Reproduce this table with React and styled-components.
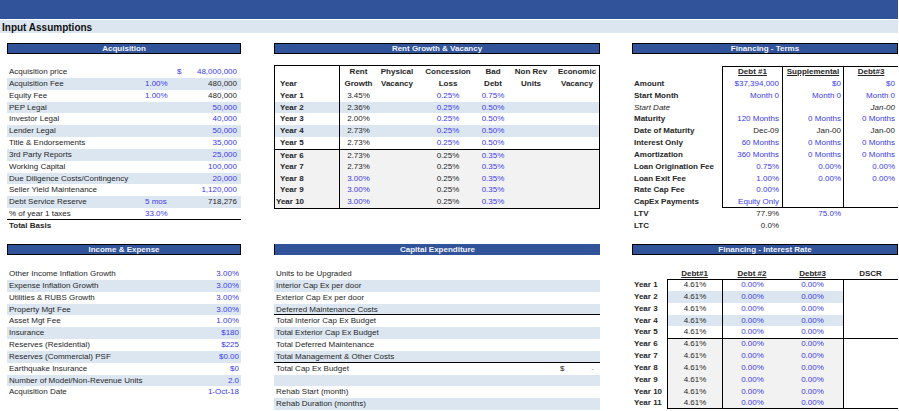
import React from 'react';
import styled, { createGlobalStyle, css } from 'styled-components';

const NAVY = '#30539a';
const SHADE = '#dce6f1';
const GREY = '#f2f2f2';
const BLUE = '#3a3aee';
const INK = '#262626';
const ROW = '11.85px';

const GlobalStyle = createGlobalStyle`
  html, body {
    margin: 0;
    padding: 0;
    background: #fff;
  }
  body {
    width: 899px;
    height: 411px;
    overflow: hidden;
    font-family: "Liberation Sans", Arial, sans-serif;
    font-size: 8px;
    color: ${INK};
  }
`;

const TopBar = styled.div`
  width: 898px;
  height: 19px;
  margin-bottom: 1px;
  background: ${NAVY};
`;

const TitleBand = styled.div`
  width: 898px;
  height: 13px;
  box-sizing: border-box;
  padding-left: 2px;
  background: ${SHADE};
  color: #111;
  font-size: 10px;
  font-weight: bold;
  line-height: 15px;
`;

const Sheet = styled.div`
  display: grid;
  grid-template-columns: 234px 33px 326px 32px 266px;
  grid-template-rows: 201px 167px;
  padding: 10px 0 0 7px;
`;

const Section = styled.section`
  grid-column: ${(p) => p.$col};
  display: flex;
  flex-direction: column;
`;

const SectionTitle = styled.div`
  height: 11px;
  box-sizing: border-box;
  margin-bottom: ${(p) => p.$gap}px;
  background: ${NAVY};
  border: 1px solid #000;
  color: #f3f3f8;
  font-size: 8px;
  font-weight: bold;
  line-height: 9px;
  text-align: center;
  ${(p) =>
    p.$open &&
    css`
      border-width: 0 0 0 1px;
      line-height: 11px;
    `}
`;

const Cell = styled.span`
  display: block;
  overflow: hidden;
  white-space: nowrap;
  color: ${(p) => (p.$tone === 'blue' ? BLUE : p.$tone === 'pale' ? '#9a9a9a' : INK)};
  text-align: ${(p) => p.$align || 'left'};
  font-weight: ${(p) => (p.$bold ? 'bold' : 'normal')};
  font-style: ${(p) => (p.$italic ? 'italic' : 'normal')};
  text-decoration: ${(p) => (p.$under ? 'underline' : 'none')};
`;

const Line = styled.div`
  display: grid;
  height: ${ROW};
  box-sizing: border-box;
  line-height: ${ROW};
  background: ${(p) => (p.$shade ? SHADE : 'transparent')};
  border-bottom: ${(p) => (p.$rule ? '1px solid #000' : 'none')};
`;

/* ---------- Acquisition ---------- */

const AcqLine = styled(Line)`
  grid-template-columns: 136px 30px 1fr;
  padding: 0 4px 0 2px;
`;

const Money = styled.span`
  display: flex;
  justify-content: space-between;
  padding-left: 2px;
  color: ${(p) => (p.$tone === 'blue' ? BLUE : INK)};
`;

const acquisition = [
  { label: 'Acquisition price', dollar: true, value: '48,000,000', tone: 'blue' },
  { label: 'Acquisition Fee', pct: '1.00%', value: '480,000' },
  { label: 'Equity Fee', pct: '1.00%', value: '480,000' },
  { label: 'PEP Legal', value: '50,000', tone: 'blue' },
  { label: 'Investor Legal', value: '40,000', tone: 'blue' },
  { label: 'Lender Legal', value: '50,000', tone: 'blue' },
  { label: 'Title & Endorsements', value: '35,000', tone: 'blue' },
  { label: '3rd Party Reports', value: '25,000', tone: 'blue' },
  { label: 'Working Capital', value: '100,000', tone: 'blue' },
  { label: 'Due Diligence Costs/Contingency', value: '20,000', tone: 'blue' },
  { label: 'Seller Yield Maintenance', value: '1,120,000', tone: 'blue' },
  { label: 'Debt Service Reserve', pct: '5 mos', value: '718,276' },
  { label: '% of year 1 taxes', pct: '33.0%', rule: true },
];

const Acquisition = () => (
  <Section $col={1}>
    <SectionTitle $gap={12}>Acquisition</SectionTitle>
    {acquisition.map((r, i) => (
      <AcqLine key={r.label} $shade={i % 2 === 1} $rule={r.rule}>
        <Cell>{r.label}</Cell>
        <Cell $tone="blue">{r.pct}</Cell>
        <Money $tone={r.tone}>
          <span>{r.dollar ? '$' : ''}</span>
          <span>{r.value}</span>
        </Money>
      </AcqLine>
    ))}
    <AcqLine>
      <Cell $bold>Total Basis</Cell>
    </AcqLine>
  </Section>
);

/* ---------- Rent Growth & Vacancy ---------- */

const RentBox = styled.div`
  border: 1px solid #000;
`;

const RentLine = styled.div`
  display: grid;
  grid-template-columns: 65px 37px 40px 62px 28px 48px 1fr;
  height: ${ROW};
  box-sizing: border-box;
  line-height: ${ROW};
  background: ${(p) => (p.$band === 'blue' ? SHADE : p.$band === 'grey' ? GREY : 'transparent')};
  border-top: ${(p) => (p.$split ? '1px solid #000' : 'none')};
`;

const RentHead = styled(RentLine)`
  height: 23.7px;
  align-items: end;
`;

const YearCell = styled(Cell)`
  height: 100%;
  box-sizing: border-box;
  padding-left: ${(p) => (p.$wide ? 1 : 5)}px;
  border-right: 1px solid #000;
  font-weight: bold;
  ${(p) =>
    p.$head &&
    css`
      display: flex;
      align-items: flex-end;
    `}
`;

const rentColumns = [
  ['Rent', 'Growth'],
  ['Physical', 'Vacancy'],
  ['Concession', 'Loss'],
  ['Bad', 'Debt'],
  ['Non Rev', 'Units'],
  ['Economic', 'Vacancy'],
];

const rentGrowth = ['3.45%', '2.36%', '2.00%', '2.73%', '2.73%', '2.73%', '2.73%', '3.00%', '3.00%', '3.00%'];
const badDebt = ['0.75%', '0.50%', '0.50%', '0.50%', '0.50%', '0.35%', '0.35%', '0.35%', '0.35%', '0.35%'];

const RentGrowth = () => (
  <Section $col={3}>
    <SectionTitle $gap={11}>Rent Growth &amp; Vacancy</SectionTitle>
    <RentBox>
      <RentHead>
        <YearCell $head>Year</YearCell>
        {rentColumns.map(([a, b]) => (
          <Cell key={a + b} $bold $align="center">
            {a}
            <br />
            {b}
          </Cell>
        ))}
      </RentHead>
      {rentGrowth.map((g, i) => {
        const late = i >= 5;
        return (
          <RentLine key={i} $band={late ? 'grey' : i % 2 === 1 ? 'blue' : ''} $split={i === 5}>
            <YearCell $wide={i === 9}>Year {i + 1}</YearCell>
            <Cell $align="center" $tone={i >= 7 ? 'blue' : 'ink'}>
              {g}
            </Cell>
            <Cell />
            <Cell $align="center" $tone={late ? 'ink' : 'blue'}>
              0.25%
            </Cell>
            <Cell $align="center" $tone="blue">
              {badDebt[i]}
            </Cell>
            <Cell />
            <Cell />
          </RentLine>
        );
      })}
    </RentBox>
  </Section>
);

/* ---------- Financing - Terms ---------- */

const TermsLine = styled(Line)`
  grid-template-columns: 90px 60px 61px 1fr;
`;

const BoxCell = styled(Cell)`
  height: 100%;
  box-sizing: border-box;
  padding-right: ${(p) => (p.$pad ?? 3)}px;
  border-left: ${(p) => (p.$boxed ? '1px solid #000' : 'none')};
  border-top: ${(p) => (p.$top ? '1px solid #000' : 'none')};
  border-bottom: ${(p) => (p.$bottom ? '1px solid #000' : 'none')};
  line-height: ${(p) => (p.$top ? '10.85px' : ROW)};
  background: ${(p) => (p.$band === 'blue' ? SHADE : p.$band === 'grey' ? GREY : 'transparent')};
`;

const LabelCell = styled(Cell)`
  padding-left: 2px;
`;

const terms = [
  { label: 'Amount', vals: ['$37,394,000', '$0', '$0'], tone: 'blue' },
  { label: 'Start Month', vals: ['Month 0', 'Month 0', 'Month 0'], tone: 'blue' },
  { label: 'Start Date', italic: true, vals: ['', '', 'Jan-00'], tone: 'ink' },
  { label: 'Maturity', vals: ['120 Months', '0 Months', '0 Months'], tone: 'blue' },
  { label: 'Date of Maturity', vals: ['Dec-09', 'Jan-00', 'Jan-00'], tone: 'ink' },
  { label: 'Interest Only', vals: ['60 Months', '0 Months', '0 Months'], tone: 'blue' },
  { label: 'Amortization', vals: ['360 Months', '0 Months', '0 Months'], tone: 'blue' },
  { label: 'Loan Origination Fee', vals: ['0.75%', '0.00%', '0.00%'], tone: 'blue' },
  { label: 'Loan Exit Fee', vals: ['1.00%', '0.00%', '0.00%'], tone: 'blue' },
  { label: 'Rate Cap Fee', vals: ['0.00%', '', ''], tone: 'blue' },
  { label: 'CapEx Payments', vals: ['Equity Only', '', ''], tone: 'blue' },
];

const FinancingTerms = () => (
  <Section $col={5}>
    <SectionTitle $gap={12}>Financing - Terms</SectionTitle>
    <TermsLine>
      <Cell />
      {['Debt #1', 'Supplemental', 'Debt#3'].map((h) => (
        <BoxCell key={h} $boxed $top $pad={0} $bold $under $align="center">
          {h}
        </BoxCell>
      ))}
    </TermsLine>
    {terms.map((r, i) => {
      const last = i === terms.length - 1;
      return (
        <TermsLine key={r.label}>
          <LabelCell $bold={!r.italic} $italic={r.italic}>
            {r.label}
          </LabelCell>
          {r.vals.map((v, j) => (
            <BoxCell
              key={j}
              $boxed
              $bottom={last}
              $pad={j === 1 ? 2 : 3}
              $align="right"
              $tone={r.tone}
              $italic={r.italic}
            >
              {v}
            </BoxCell>
          ))}
        </TermsLine>
      );
    })}
    <TermsLine>
      <LabelCell $bold>LTV</LabelCell>
      <BoxCell $align="right">77.9%</BoxCell>
      <BoxCell $align="right" $pad={2} $tone="blue">
        75.0%
      </BoxCell>
    </TermsLine>
    <TermsLine>
      <LabelCell $bold>LTC</LabelCell>
      <BoxCell $align="right">0.0%</BoxCell>
    </TermsLine>
  </Section>
);

/* ---------- Income & Expense ---------- */

const IncomeLine = styled(Line)`
  grid-template-columns: 1fr auto;
  padding: 0 2px 0 2px;
`;

const income = [
  ['Other Income Inflation Growth', '3.00%'],
  ['Expense Inflation Growth', '3.00%'],
  ['Utilities & RUBS Growth', '3.00%'],
  ['Property Mgt Fee', '3.00%'],
  ['Asset Mgt Fee', '1.00%'],
  ['Insurance', '$180'],
  ['Reserves (Residential)', '$225'],
  ['Reserves (Commercial) PSF', '$0.00'],
  ['Earthquake Insurance', '$0'],
  ['Number of Model/Non-Revenue Units', '2.0'],
  ['Acquisition Date', '1-Oct-18'],
];

const IncomeExpense = () => (
  <Section $col={1}>
    <SectionTitle $gap={13}>Income &amp; Expense</SectionTitle>
    {income.map(([label, value], i) => (
      <IncomeLine key={label} $shade={i % 2 === 1}>
        <Cell>{label}</Cell>
        <Cell $tone="blue" $align="right">
          {value}
        </Cell>
      </IncomeLine>
    ))}
  </Section>
);

/* ---------- Capital Expenditure ---------- */

const CapexLine = styled(Line)`
  grid-template-columns: 1fr 40px;
  padding-left: 2px;
`;

const capex = [
  { label: 'Units to be Upgraded' },
  { label: 'Interior Cap Ex per door' },
  { label: 'Exterior Cap Ex per door' },
  { label: 'Deferred Maintenance Costs', rule: true },
  { label: 'Total Interior Cap Ex Budget' },
  { label: 'Total Exterior Cap Ex Budget' },
  { label: 'Total Deferred Maintenance' },
  { label: 'Total Management & Other Costs', rule: true },
  { label: 'Total Cap Ex Budget', total: true },
  { label: '' },
  { label: 'Rehab Start (month)' },
  { label: 'Rehab Duration (months)' },
];

const Dash = styled.span`
  display: flex;
  justify-content: space-between;
  padding-right: 6px;
`;

const CapitalExpenditure = () => (
  <Section $col={3}>
    <SectionTitle $gap={13} $open>
      Capital Expenditure
    </SectionTitle>
    {capex.map((r, i) => (
      <CapexLine key={i} $shade={i % 2 === 1} $rule={r.rule}>
        <Cell>{r.label}</Cell>
        {r.total ? (
          <Dash>
            <span>$</span>
            <Cell $tone="pale">-</Cell>
          </Dash>
        ) : (
          <span />
        )}
      </CapexLine>
    ))}
  </Section>
);

/* ---------- Financing - Interest Rate ---------- */

const RateLine = styled.div`
  display: grid;
  grid-template-columns: 35px 55px 60px 61px 1fr;
  height: ${(p) => p.$h || ROW};
  line-height: ${(p) => p.$h || ROW};
`;

const RateCell = styled(BoxCell)`
  padding-right: 0;
  ${(p) =>
    p.$split &&
    css`
      border-top: 1px solid #000;
      line-height: 10.85px;
    `}
`;

const InterestRate = () => {
  const years = Array.from({ length: 11 }, (_, i) => i + 1);
  return (
    <Section $col={5}>
      <SectionTitle $gap={13}>Financing - Interest Rate</SectionTitle>
      <RateLine $h="11px">
        <Cell />
        <Cell $bold $under $align="center">Debt#1</Cell>
        <Cell $bold $under $align="center">Debt #2</Cell>
        <Cell $bold $under $align="center">Debt#3</Cell>
        <Cell $bold $align="center">DSCR</Cell>
      </RateLine>
      {years.map((y, i) => {
        const band = i >= 5 ? 'grey' : i % 2 === 1 ? 'blue' : '';
        const edge = { $top: i === 0, $bottom: i === years.length - 1 };
        const split = i === 5;
        return (
          <RateLine key={y}>
            <LabelCell $bold>Year {y}</LabelCell>
            <RateCell $boxed $band={band} $split={split} {...edge} $align="center">
              4.61%
            </RateCell>
            <RateCell $boxed $band={band} $split={split} {...edge} $align="center" $tone="blue">
              0.00%
            </RateCell>
            <RateCell $band={band} $split={split} {...edge} $align="center" $tone="blue">
              0.00%
            </RateCell>
            <RateCell $boxed $split={split} {...edge} />
          </RateLine>
        );
      })}
    </Section>
  );
};

export default function App() {
  return (
    <>
      <GlobalStyle />
      <TopBar />
      <TitleBand>Input Assumptions</TitleBand>
      <Sheet>
        <Acquisition />
        <RentGrowth />
        <FinancingTerms />
        <IncomeExpense />
        <CapitalExpenditure />
        <InterestRate />
      </Sheet>
    </>
  );
}
